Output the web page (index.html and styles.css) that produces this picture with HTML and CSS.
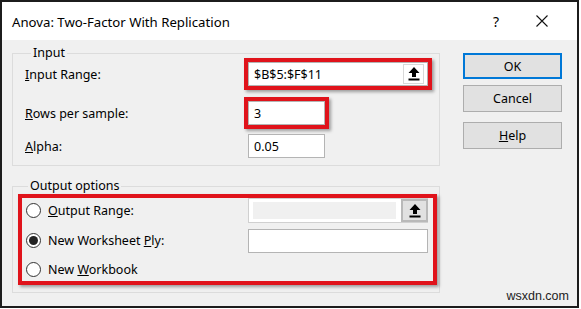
FILE: index.html
```html
<!DOCTYPE html>
<html lang="en">
<head>
  <meta charset="UTF-8" />
  <title>Anova: Two-Factor With Replication</title>
  <link rel="stylesheet" href="styles.css">
</head>
<body>
  <div class="dialog">
    <!-- Title bar -->
    <div class="titlebar">
      <span class="title">Anova: Two-Factor With Replication</span>
      <span class="title-btn help-mark">?</span>
      <span class="title-btn close-mark">
        <svg width="12" height="12" viewBox="0 0 12 12"><path d="M0.5 0.5 L11.5 11.5 M11.5 0.5 L0.5 11.5" stroke="#111" stroke-width="1.1" fill="none"/></svg>
      </span>
    </div>

    <div class="content">
      <div class="groups">
        <!-- Input group -->
        <fieldset class="group group-input">
          <legend>Input</legend>
          <div class="row row-range">
            <span class="label"><u>I</u>nput Range:</span>
            <div class="textbox wide highlight">
              <span class="value">$B$5:$F$11</span>
              <span class="ref-btn">
                <svg width="12" height="14" viewBox="0 0 12 14"><path d="M6 0 L11.5 6 H8 V10 H4 V6 H0.5 Z" fill="#000"/><rect x="0.5" y="11.5" width="11" height="2" fill="#000"/></svg>
              </span>
            </div>
          </div>
          <div class="row row-rows">
            <span class="label"><u>R</u>ows per sample:</span>
            <div class="textbox short highlight"><span class="value">3</span></div>
          </div>
          <div class="row row-alpha">
            <span class="label"><u>A</u>lpha:</span>
            <div class="textbox short"><span class="value">0.05</span></div>
          </div>
        </fieldset>

        <!-- Output group -->
        <fieldset class="group group-output">
          <legend>Output options</legend>
          <div class="options highlight">
            <div class="opt-row">
              <span class="radio"></span>
              <span class="opt-label"><u>O</u>utput Range:</span>
              <div class="textbox wide disabled">
                <span class="value"></span>
                <span class="ref-btn gray">
                  <svg width="12" height="14" viewBox="0 0 12 14"><path d="M6 0 L11.5 6 H8 V10 H4 V6 H0.5 Z" fill="#000"/><rect x="0.5" y="11.5" width="11" height="2" fill="#000"/></svg>
                </span>
              </div>
            </div>
            <div class="opt-row">
              <span class="radio checked"></span>
              <span class="opt-label">New Worksheet <u>P</u>ly:</span>
              <div class="textbox wide"><span class="value"></span></div>
            </div>
            <div class="opt-row last">
              <span class="radio"></span>
              <span class="opt-label">New <u>W</u>orkbook</span>
            </div>
          </div>
        </fieldset>
      </div>

      <!-- Buttons -->
      <div class="buttons">
        <button class="btn btn-default">OK</button>
        <button class="btn">Cancel</button>
        <button class="btn btn-help"><u>H</u>elp</button>
      </div>
    </div>

    <div class="watermark">wsxdn.com</div>
  </div>
</body>
</html>
```

FILE: styles.css
```css
* {
  box-sizing: border-box;
}
body {
  margin: 0;
  background: #fff;
  font-family: 'Noto Sans', 'Liberation Sans', sans-serif;
  font-size: 12.5px;
  color: #000;
}
.dialog {
  position: relative;
  width: 579px;
  height: 308px;
  border: 2px solid #1c1c1c;
  background: #f0f0f0;
}
/* Title bar */
.titlebar {
  display: flex;
  align-items: center;
  height: 38px;
  padding-left: 10px;
  background: #fff;
}
.title {
  font-size: 13.2px;
  flex: 1;
  padding-top: 1px;
}
.title-btn {
  display: flex;
  justify-content: center;
  align-items: center;
  width: 46px;
  height: 38px;
}
.help-mark {
  font-size: 14px;
}
.close-mark {
  margin-right: 12px;
}
/* Content */
.content {
  display: flex;
  padding: 5px 0 0 10px;
}
.groups {
  width: 428px;
}
.group {
  margin: 0;
  padding: 0;
  border: 1px solid #dcdcdc;
  min-width: 0;
}
.group legend {
  margin-left: 6px;
  padding: 0 2px;
  line-height: 16px;
}
.group-input {
  padding: 1px 0 7px 12px;
}
.row {
  display: flex;
  align-items: center;
  height: 24px;
}
.row-rows {
  margin-top: 15px;
}
.row-alpha {
  margin-top: 9px;
}
.label {
  width: 223px;
}
.textbox {
  display: flex;
  align-items: center;
  height: 24px;
  background: #fff;
  border: 1px solid #b4b4b4;
}
.textbox.wide {
  width: 180px;
}
.textbox.short {
  width: 77px;
}
.textbox .value {
  flex: 1;
  padding-left: 5px;
}
.highlight {
  box-shadow: 0 0 0 4px #e0131b, 2px 2px 3px 4px rgba(0, 0, 0, 0.35);
}
.ref-btn {
  display: flex;
  justify-content: center;
  align-items: center;
  width: 21px;
  height: 20px;
  margin-right: 3px;
  border: 1px solid #d8d8d8;
  background: #fff;
}
.textbox.disabled {
  border-color: #d0d0d0;
  padding: 3px 0 3px 4px;
  height: 25px;
}
.textbox.disabled .value {
  align-self: stretch;
  background: #f0f0f0;
  margin-right: 5px;
}
.ref-btn.gray {
  width: 27px;
  height: 23px;
  margin-right: -1px;
  background: #e1e1e1;
  border: 2px solid #b9b9b9;
}
/* Output group */
.group-output {
  margin-top: 12px;
  padding: 4px 6px 11px 9px;
}
.options {
  padding: 0 0 0 4px;
}
.opt-row {
  display: flex;
  align-items: center;
  height: 25px;
  margin-bottom: 5px;
}
.opt-row.last {
  height: 23px;
  margin-bottom: 0;
}
.radio {
  position: relative;
  width: 15px;
  height: 15px;
  border: 1px solid #333;
  border-radius: 50%;
  background: #fff;
  flex-shrink: 0;
}
.radio.checked::after {
  content: '';
  position: absolute;
  left: 2px;
  top: 2px;
  width: 9px;
  height: 9px;
  border-radius: 50%;
  background: #222;
}
.opt-label {
  width: 200px;
  margin-left: 7px;
}
/* Buttons */
.buttons {
  display: flex;
  flex-direction: column;
  margin-left: 23px;
  padding-top: 8px;
}
.btn {
  width: 99px;
  height: 27px;
  margin: 0 0 6px;
  padding: 0;
  font-family: inherit;
  font-size: 12.5px;
  color: #000;
  background: #e1e1e1;
  border: 1px solid #adadad;
}
.btn-default {
  height: 26px;
  border: 2px solid #0078d7;
}
.btn-help {
  margin-top: 4px;
}
.watermark {
  position: absolute;
  right: 8px;
  bottom: 3px;
  font-family: 'Liberation Sans', sans-serif;
  font-size: 12.5px;
  color: #222;
}
```
